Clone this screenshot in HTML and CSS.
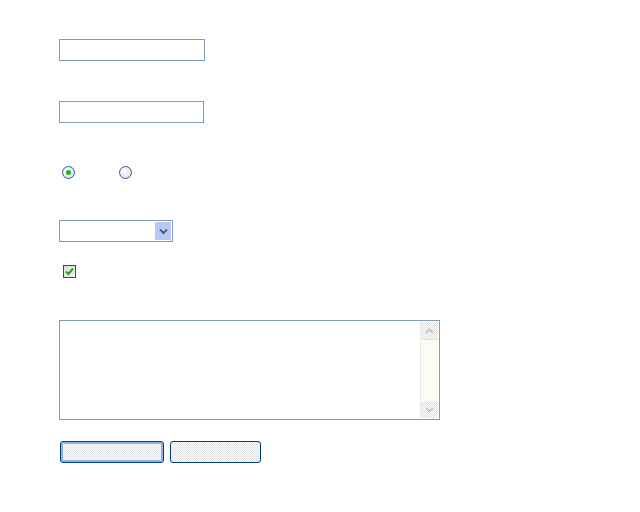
FILE: index.html
```html
<!DOCTYPE html>
<html>
<head>
<meta charset="utf-8">
<link rel="stylesheet" href="styles.css">
</head>
<body>
<form class="form">
  <input class="text text-a" type="text">
  <input class="text text-b" type="text">
  <div class="radios">
    <span class="radio on"><span class="dot"></span></span>
    <span class="radio"></span>
  </div>
  <div class="select">
    <span class="arrow">
      <svg width="9" height="7" viewBox="0 0 9 7"><path d="M1 1.5 L4.5 5 L8 1.5" fill="none" stroke="#4d6185" stroke-width="2"/></svg>
    </span>
  </div>
  <span class="check">
    <svg width="9" height="9" viewBox="0 0 9 9"><path d="M1 4.5 L3.5 7 L8 1.5" fill="none" stroke="#21a121" stroke-width="2"/></svg>
  </span>
  <div class="area">
    <div class="scroll">
      <span class="sbtn up">
        <svg width="9" height="6" viewBox="0 0 9 6"><path d="M1 5 L4.5 1.5 L8 5" fill="none" stroke="#c8c8c8" stroke-width="2"/></svg>
      </span>
      <span class="track"></span>
      <span class="sbtn down">
        <svg width="9" height="6" viewBox="0 0 9 6"><path d="M1 1 L4.5 4.5 L8 1" fill="none" stroke="#c8c8c8" stroke-width="2"/></svg>
      </span>
    </div>
  </div>
  <div class="buttons">
    <button type="button" class="btn primary"></button>
    <button type="button" class="btn"></button>
  </div>
</form>
</body>
</html>
```
FILE: styles.css
```css
html, body {
  margin: 0;
  padding: 0;
  background: #ffffff;
  font-family: "Liberation Sans", Arial, sans-serif;
}
.form {
  display: flex;
  flex-direction: column;
  align-items: flex-start;
  padding: 39px 0 0 59px;
}
.text {
  appearance: none;
  margin: 0;
  padding: 0;
  height: 22px;
  box-sizing: border-box;
  border: 1px solid #7f9db9;
  background: #fff;
  outline: none;
}
.text-a { width: 146px; }
.text-b { width: 145px; margin-top: 40px; }
.radios {
  display: flex;
  gap: 44px;
  margin: 43px 0 0 3px;
}
.radio {
  width: 13px;
  height: 13px;
  box-sizing: border-box;
  border-radius: 50%;
  border: 1px solid #2a5e98;
  background: radial-gradient(circle at 40% 40%, #ffffff 0, #e4e4e4 70%, #d6d6d6 100%);
  display: flex;
  align-items: center;
  justify-content: center;
}
.dot {
  width: 5px;
  height: 5px;
  border-radius: 50%;
  background: #21b121;
}
.select {
  margin-top: 41px;
  width: 114px;
  height: 22px;
  box-sizing: border-box;
  border: 1px solid #7f9db9;
  display: flex;
  justify-content: flex-end;
  padding: 1px;
}
.arrow {
  width: 16px;
  height: 18px;
  background: #b9c9f5;
  display: flex;
  align-items: center;
  justify-content: center;
  border-radius: 1px;
}
.check {
  margin: 23px 0 0 4px;
  width: 13px;
  height: 13px;
  box-sizing: border-box;
  border: 1px solid #1c5180;
  background: linear-gradient(135deg, #dcdcd6, #f4f4f0);
  display: flex;
  align-items: center;
  justify-content: center;
}
.area {
  margin-top: 42px;
  width: 381px;
  height: 100px;
  box-sizing: border-box;
  border: 1px solid #7f9db9;
  display: flex;
  justify-content: flex-end;
  padding: 1px 1px 1px 0;
}
.scroll {
  width: 17px;
  display: flex;
  flex-direction: column;
  background: repeating-conic-gradient(#f7f7ee 0 25%, #ffffff 0 50%) 0 0 / 2px 2px;
  border-left: 1px dotted #dcdcdc;
}
.sbtn {
  height: 17px;
  display: flex;
  align-items: center;
  justify-content: center;
  background: repeating-conic-gradient(#dedede 0 25%, #ffffff 0 50%) 0 0 / 2px 2px;
}
.sbtn.up { border-bottom: 1px solid #e2e2da; }
.track { flex: 1; }
.buttons {
  display: flex;
  gap: 6px;
  margin: 21px 0 0 1px;
}
.btn {
  appearance: none;
  margin: 0;
  padding: 0;
  height: 22px;
  box-sizing: border-box;
  border: 1px solid #003c74;
  border-radius: 3px;
  background: repeating-conic-gradient(#e2e2e2 0 25%, #fcfcfc 0 50%) 0 0 / 2px 2px;
}
.btn.primary {
  width: 104px;
  box-shadow: inset 0 0 0 2px #8fb0ef;
}
.btn:not(.primary) { width: 91px; }
```
